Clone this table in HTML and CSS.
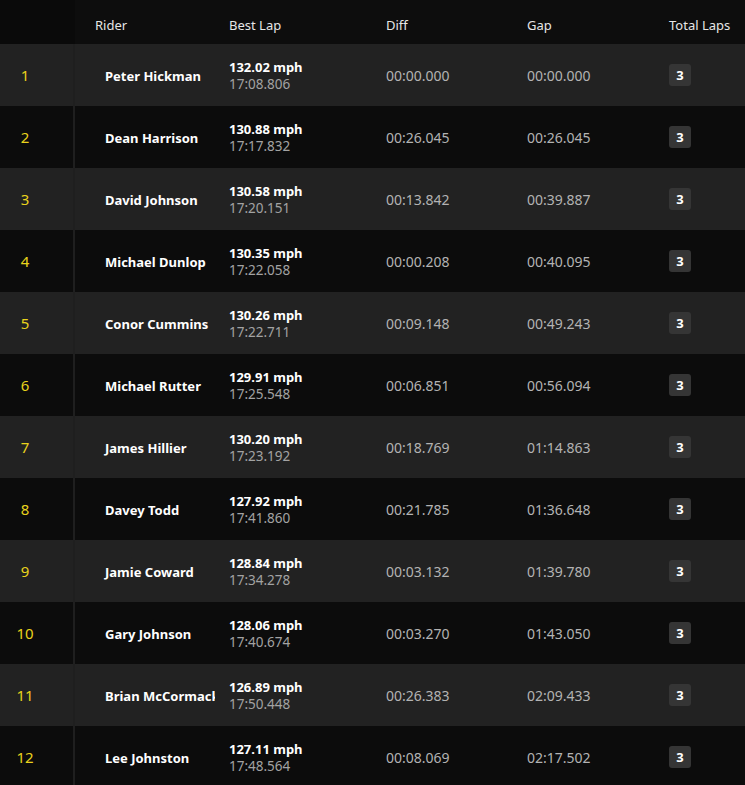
FILE: index.html
```html
<!DOCTYPE html>
<html>
<head>
<meta charset="utf-8">
<link rel="stylesheet" href="styles.css">
</head>
<body>
<div class="table">
  <div class="row head">
    <div class="c pos"></div>
    <div class="c rider">Rider</div>
    <div class="c lap">Best Lap</div>
    <div class="c diff">Diff</div>
    <div class="c gap">Gap</div>
    <div class="c laps">Total Laps</div>
  </div>
  <div class="row light">
    <div class="c pos">1</div>
    <div class="c rider name">Peter Hickman</div>
    <div class="c lap"><div class="speed">132.02 mph</div><div class="time">17:08.806</div></div>
    <div class="c diff val">00:00.000</div>
    <div class="c gap val">00:00.000</div>
    <div class="c laps"><span class="badge">3</span></div>
  </div>
  <div class="row dark">
    <div class="c pos">2</div>
    <div class="c rider name">Dean Harrison</div>
    <div class="c lap"><div class="speed">130.88 mph</div><div class="time">17:17.832</div></div>
    <div class="c diff val">00:26.045</div>
    <div class="c gap val">00:26.045</div>
    <div class="c laps"><span class="badge">3</span></div>
  </div>
  <div class="row light">
    <div class="c pos">3</div>
    <div class="c rider name">David Johnson</div>
    <div class="c lap"><div class="speed">130.58 mph</div><div class="time">17:20.151</div></div>
    <div class="c diff val">00:13.842</div>
    <div class="c gap val">00:39.887</div>
    <div class="c laps"><span class="badge">3</span></div>
  </div>
  <div class="row dark">
    <div class="c pos">4</div>
    <div class="c rider name">Michael Dunlop</div>
    <div class="c lap"><div class="speed">130.35 mph</div><div class="time">17:22.058</div></div>
    <div class="c diff val">00:00.208</div>
    <div class="c gap val">00:40.095</div>
    <div class="c laps"><span class="badge">3</span></div>
  </div>
  <div class="row light">
    <div class="c pos">5</div>
    <div class="c rider name">Conor Cummins</div>
    <div class="c lap"><div class="speed">130.26 mph</div><div class="time">17:22.711</div></div>
    <div class="c diff val">00:09.148</div>
    <div class="c gap val">00:49.243</div>
    <div class="c laps"><span class="badge">3</span></div>
  </div>
  <div class="row dark">
    <div class="c pos">6</div>
    <div class="c rider name">Michael Rutter</div>
    <div class="c lap"><div class="speed">129.91 mph</div><div class="time">17:25.548</div></div>
    <div class="c diff val">00:06.851</div>
    <div class="c gap val">00:56.094</div>
    <div class="c laps"><span class="badge">3</span></div>
  </div>
  <div class="row light">
    <div class="c pos">7</div>
    <div class="c rider name">James Hillier</div>
    <div class="c lap"><div class="speed">130.20 mph</div><div class="time">17:23.192</div></div>
    <div class="c diff val">00:18.769</div>
    <div class="c gap val">01:14.863</div>
    <div class="c laps"><span class="badge">3</span></div>
  </div>
  <div class="row dark">
    <div class="c pos">8</div>
    <div class="c rider name">Davey Todd</div>
    <div class="c lap"><div class="speed">127.92 mph</div><div class="time">17:41.860</div></div>
    <div class="c diff val">00:21.785</div>
    <div class="c gap val">01:36.648</div>
    <div class="c laps"><span class="badge">3</span></div>
  </div>
  <div class="row light">
    <div class="c pos">9</div>
    <div class="c rider name">Jamie Coward</div>
    <div class="c lap"><div class="speed">128.84 mph</div><div class="time">17:34.278</div></div>
    <div class="c diff val">00:03.132</div>
    <div class="c gap val">01:39.780</div>
    <div class="c laps"><span class="badge">3</span></div>
  </div>
  <div class="row dark">
    <div class="c pos">10</div>
    <div class="c rider name">Gary Johnson</div>
    <div class="c lap"><div class="speed">128.06 mph</div><div class="time">17:40.674</div></div>
    <div class="c diff val">00:03.270</div>
    <div class="c gap val">01:43.050</div>
    <div class="c laps"><span class="badge">3</span></div>
  </div>
  <div class="row light">
    <div class="c pos">11</div>
    <div class="c rider name">Brian McCormack</div>
    <div class="c lap"><div class="speed">126.89 mph</div><div class="time">17:50.448</div></div>
    <div class="c diff val">00:26.383</div>
    <div class="c gap val">02:09.433</div>
    <div class="c laps"><span class="badge">3</span></div>
  </div>
  <div class="row dark">
    <div class="c pos">12</div>
    <div class="c rider name">Lee Johnston</div>
    <div class="c lap"><div class="speed">127.11 mph</div><div class="time">17:48.564</div></div>
    <div class="c diff val">00:08.069</div>
    <div class="c gap val">02:17.502</div>
    <div class="c laps"><span class="badge">3</span></div>
  </div>
</div>
</body>
</html>
```

FILE: styles.css
```css
html, body {
  margin: 0;
  padding: 0;
  background: #0d0d0d;
}
body {
  font-family: "Noto Sans", "Open Sans", sans-serif;
  color: #fff;
  overflow: hidden;
}
.table {
  display: flex;
  flex-direction: column;
  width: 745px;
}
.row {
  display: grid;
  grid-template-columns: 75px 154px 157px 141px 142px 76px;
  height: 62px;
  align-items: stretch;
}
.row.head {
  height: 44px;
  background: #0d0d0d;
}
.row.light { background: #222222; }
.row.dark { background: #0c0c0c; }
.c {
  display: flex;
  align-items: center;
  min-width: 0;
}
.head .c {
  font-size: 13px;
  color: #e6e6e6;
  padding-top: 6px;
}
.pos {
  justify-content: center;
  padding-right: 23px;
  border-right: 2px solid #1f1f1f;
  color: #e9d31c;
  font-size: 15px;
}
.head .pos {
  border-right: 0;
  background: #0a0a0a;
}
.rider {
  padding-left: 20px;
}
.name {
  padding-left: 30px;
  margin-right: 14px;
  font-weight: 700;
  font-size: 13px;
  white-space: nowrap;
  overflow: hidden;
  padding-top: 2px;
}
.lap {
  flex-direction: column;
  align-items: flex-start;
  justify-content: center;
}
.speed {
  font-weight: 700;
  font-size: 13px;
  line-height: 17px;
  color: #fff;
}
.time {
  font-size: 13.5px;
  line-height: 16px;
  color: #a3a3a3;
}
.val {
  color: #b3b3b3;
  font-size: 14px;
}
.badge {
  display: flex;
  align-items: center;
  justify-content: center;
  width: 22px;
  height: 22px;
  border-radius: 3px;
  background: #353535;
  font-weight: 700;
  font-size: 13px;
  color: #fff;
}
```
